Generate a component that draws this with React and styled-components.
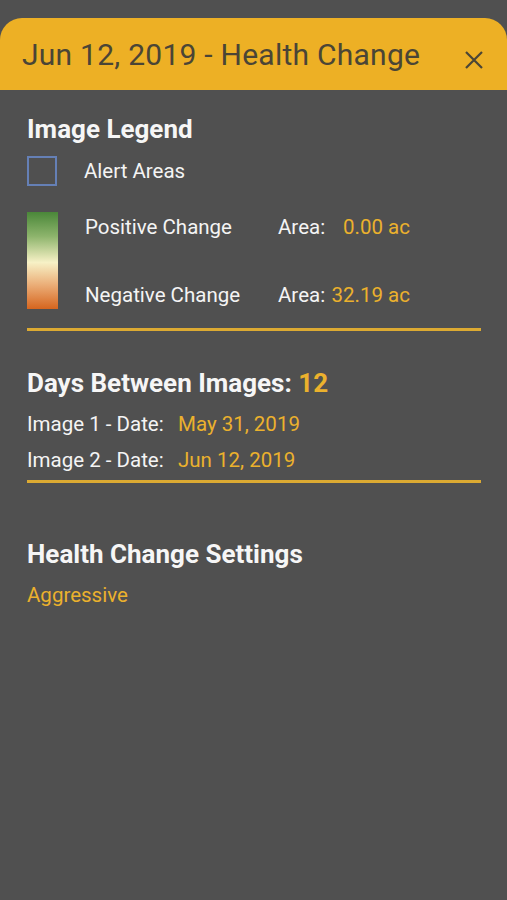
import React from 'react';
import styled, { createGlobalStyle } from 'styled-components';

const GlobalStyle = createGlobalStyle`
  html, body {
    margin: 0;
    padding: 0;
    background: #505050;
  }
  body {
    font-family: Roboto, "Noto Sans", "Liberation Sans", sans-serif;
  }
`;

const Page = styled.div`
  width: 507px;
  min-height: 900px;
  background: #505050;
  padding-top: 18px;
  box-sizing: border-box;
`;

const Header = styled.div`
  height: 72px;
  background: #edb025;
  border-radius: 22px 22px 0 0;
  display: flex;
  align-items: center;
  justify-content: space-between;
  padding: 0 24px 0 22px;
`;

const Title = styled.h1`
  margin: 0;
  font-size: 30px;
  font-weight: 400;
  color: #4a4536;
  letter-spacing: 0.25px;
`;

const CloseButton = styled.button`
  border: 0;
  background: none;
  padding: 0;
  margin-top: 12px;
  width: 18px;
  height: 18px;
  display: flex;
  cursor: pointer;
`;

const Body = styled.div`
  padding: 0 26px 0 27px;
  color: #f4f4f4;
`;

const SectionTitle = styled.h2`
  margin: ${props => props.top}px 0 0;
  font-size: 26px;
  line-height: 30px;
  font-weight: 700;
  color: #f6f6f6;
`;

const Accent = styled.span`
  color: #ebb12d;
`;

const AlertRow = styled.div`
  display: flex;
  align-items: center;
  gap: 27px;
  margin-top: 12px;
  font-size: 20.5px;
`;

const AlertBox = styled.div`
  width: 30px;
  height: 30px;
  box-sizing: border-box;
  border: 2px solid #6580b6;
`;

const Legend = styled.div`
  display: flex;
  gap: 27px;
  margin-top: 26px;
`;

const Gradient = styled.div`
  width: 31px;
  height: 97px;
  background: linear-gradient(
    to bottom,
    #4a8739 0%,
    #8db46c 25%,
    #f7f1c6 52%,
    #ebae78 75%,
    #d6651e 100%
  );
`;

const LegendRows = styled.div`
  display: flex;
  flex-direction: column;
  justify-content: space-between;
  padding: 1px 0 0;
`;

const LegendRow = styled.div`
  display: grid;
  grid-template-columns: 193px 132px;
  font-size: 20.5px;
  line-height: 28px;
`;

const AreaCell = styled.div`
  display: flex;
  justify-content: space-between;
`;

const Divider = styled.div`
  height: 3px;
  background: #dcaa32;
  margin-top: ${props => props.top}px;
`;

const InfoRow = styled.div`
  display: grid;
  grid-template-columns: 151px auto;
  font-size: 20.5px;
  line-height: 36px;
  &:first-of-type {
    margin-top: 8px;
  }
`;

const Setting = styled.div`
  margin-top: 12px;
  font-size: 20.5px;
  line-height: 28px;
  color: #ebb12d;
`;

const CloseIcon = () => (
  <svg width="18" height="18" viewBox="0 0 18 18">
    <path d="M1 1L17 17M17 1L1 17" stroke="#4a4536" strokeWidth="2.2" fill="none" />
  </svg>
);

const legend = [
  { label: 'Positive Change', area: '0.00 ac' },
  { label: 'Negative Change', area: '32.19 ac' },
];

const dates = [
  { label: 'Image 1 - Date:', value: 'May 31, 2019' },
  { label: 'Image 2 - Date:', value: 'Jun 12, 2019' },
];

export default function App() {
  return (
    <Page>
      <GlobalStyle />
      <Header>
        <Title>Jun 12, 2019 - Health Change</Title>
        <CloseButton aria-label="Close">
          <CloseIcon />
        </CloseButton>
      </Header>
      <Body>
        <SectionTitle top={24}>Image Legend</SectionTitle>
        <AlertRow>
          <AlertBox />
          <span>Alert Areas</span>
        </AlertRow>
        <Legend>
          <Gradient />
          <LegendRows>
            {legend.map(item => (
              <LegendRow key={item.label}>
                <span>{item.label}</span>
                <AreaCell>
                  <span>Area:</span>
                  <Accent>{item.area}</Accent>
                </AreaCell>
              </LegendRow>
            ))}
          </LegendRows>
        </Legend>
        <Divider top={19} />

        <SectionTitle top={37}>
          Days Between Images: <Accent>12</Accent>
        </SectionTitle>
        <div>
          {dates.map(item => (
            <InfoRow key={item.label}>
              <span>{item.label}</span>
              <Accent>{item.value}</Accent>
            </InfoRow>
          ))}
        </div>
        <Divider top={2} />

        <SectionTitle top={56}>Health Change Settings</SectionTitle>
        <Setting>Aggressive</Setting>
      </Body>
    </Page>
  );
}
